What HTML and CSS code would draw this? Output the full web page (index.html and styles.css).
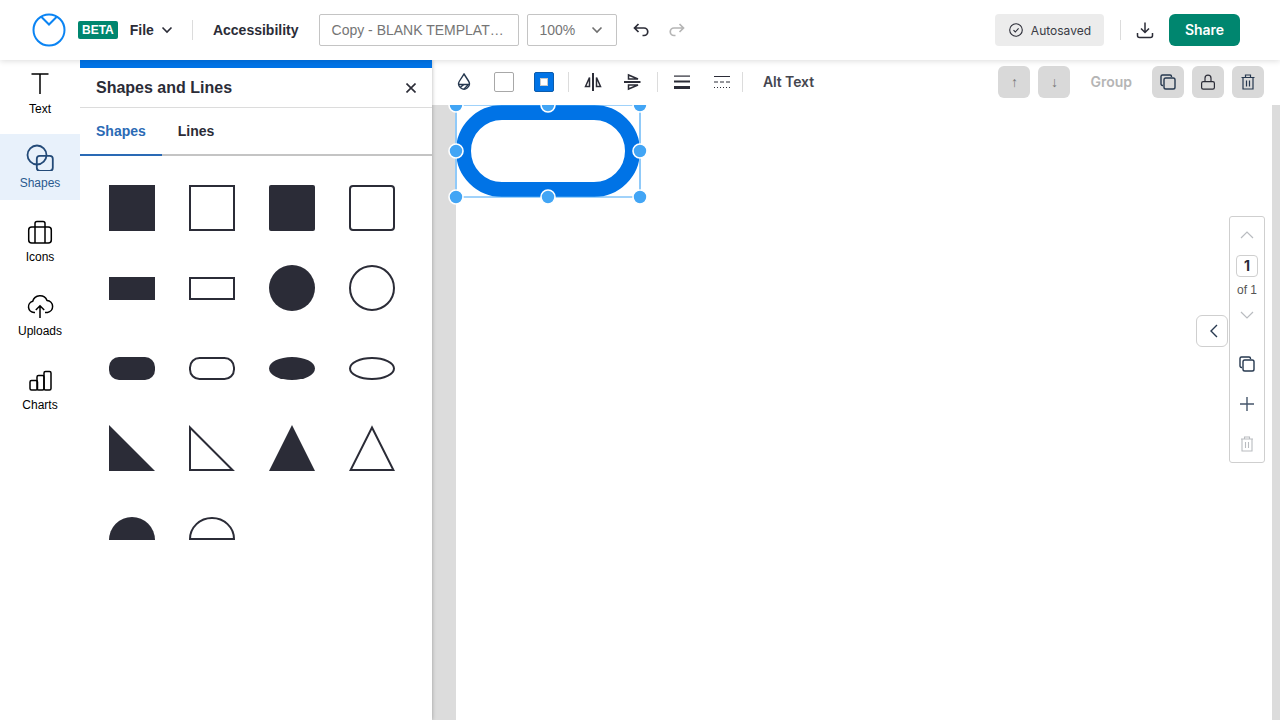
FILE: index.html
```html
<!DOCTYPE html>
<html>
<head>
  <title>Shapes and Lines</title>
  <link rel="stylesheet" href="styles.css">
</head>
<body>
  <!-- Top bar -->
  <header class="topbar">
    <svg class="logo" width="34" height="34" viewBox="0 0 34 34" fill="none" stroke="#0b84f3" stroke-width="2">
      <circle cx="17" cy="17" r="15.5"/>
      <path d="M9 3.5 17 11.5 25 3.5"/>
    </svg>
    <span class="beta">BETA</span>
    <span class="menu-file">File</span>
    <svg class="file-chevron" width="12" height="8" viewBox="0 0 12 8" fill="none" stroke="#2b2c37" stroke-width="1.6"><path d="M1.5 1.5 6 6 10.5 1.5"/></svg>
    <span class="vline vline-file"></span>
    <span class="menu-access">Accessibility</span>
    <div class="doc-title">Copy - BLANK TEMPLAT…</div>
    <div class="zoom-select">
      <span>100%</span>
      <svg width="12" height="8" viewBox="0 0 12 8" fill="none" stroke="#6f6f6f" stroke-width="1.6"><path d="M1.5 1.5 6 6 10.5 1.5"/></svg>
    </div>
    <svg class="undo" width="16" height="14" viewBox="0 0 16 14" fill="none" stroke="#2b2c37" stroke-width="1.7"><path d="M5.5 1 1.5 5 5.5 9M1.5 5H11a3.7 3.7 0 0 1 0 7.5H9.5"/></svg>
    <svg class="redo" width="16" height="14" viewBox="0 0 16 14" fill="none" stroke="#b5b5b5" stroke-width="1.7"><path d="M10.5 1 14.5 5 10.5 9M14.5 5H5a3.7 3.7 0 0 0 0 7.5h1.5"/></svg>

    <div class="autosaved">
      <svg width="14" height="14" viewBox="0 0 14 14" fill="none" stroke="#2b2c37" stroke-width="1.1"><circle cx="7" cy="7" r="6.3"/><path d="M4.5 7.2 6.3 9 9.6 5.3"/></svg>
      <span>Autosaved</span>
    </div>
    <span class="vline vline-save"></span>
    <svg class="download" width="18" height="18" viewBox="0 0 18 18" fill="none" stroke="#2b2c37" stroke-width="1.5"><path d="M9 1.5V11M5 7.5 9 11.5 13 7.5M1.5 12v2.5a2 2 0 0 0 2 2h11a2 2 0 0 0 2-2V12"/></svg>
    <button class="share">Share</button>
  </header>

  <div class="main">
    <!-- Left tool rail -->
    <nav class="rail">
      <div class="rail-item">
        <svg width="28" height="28" viewBox="0 0 28 28" fill="none" stroke="#000" stroke-width="1.5"><path d="M5.5 5H22.5M14 5V25"/></svg>
        <span>Text</span>
      </div>
      <div class="rail-item rail-active">
        <svg width="28" height="28" viewBox="0 0 28 28" fill="none" stroke="#234a78" stroke-width="1.8"><circle cx="11" cy="12" r="9.5"/><rect x="10.8" y="12.8" width="16" height="15" rx="3"/></svg>
        <span>Shapes</span>
      </div>
      <div class="rail-item">
        <svg width="28" height="28" viewBox="0 0 28 28" fill="none" stroke="#000" stroke-width="1.5"><rect x="2.7" y="10" width="22.6" height="16" rx="3"/><path d="M9 26V6.5a2 2 0 0 1 2-2h6a2 2 0 0 1 2 2V26"/></svg>
        <span>Icons</span>
      </div>
      <div class="rail-item">
        <svg width="28" height="28" viewBox="0 0 28 28" fill="none" stroke="#000" stroke-width="1.5"><path d="M9 21.5H8a5.7 5.7 0 0 1-1.3-11.2A7.6 7.6 0 0 1 21 9.4a6.1 6.1 0 0 1 .5 12.1H19"/><path d="M14 27V15M9.8 19 14 14.8 18.2 19"/></svg>
        <span>Uploads</span>
      </div>
      <div class="rail-item">
        <svg width="28" height="28" viewBox="0 0 28 28" fill="none" stroke="#000" stroke-width="1.5"><rect x="4" y="15.5" width="7.5" height="9.5" rx="1.5"/><rect x="11" y="10.5" width="7" height="14.5" rx="1.5"/><rect x="18" y="6.5" width="7" height="18.5" rx="1.5"/></svg>
        <span>Charts</span>
      </div>
    </nav>

    <!-- Shapes panel -->
    <section class="panel">
      <div class="panel-head">
        <h2>Shapes and Lines</h2>
        <svg width="10" height="10" viewBox="0 0 10 10" fill="none" stroke="#2b2c37" stroke-width="1.6"><path d="M.5.5 9.5 9.5M9.5.5.5 9.5"/></svg>
      </div>
      <div class="tabs">
        <div class="tab tab-active">Shapes</div>
        <div class="tab">Lines</div>
      </div>
      <div class="shape-grid">
        <svg class="solid" viewBox="0 0 46 46"><rect width="46" height="46"/></svg>
        <svg class="line" viewBox="0 0 46 46"><rect x="1" y="1" width="44" height="44"/></svg>
        <svg class="solid" viewBox="0 0 46 46"><rect width="46" height="46" rx="2"/></svg>
        <svg class="line" viewBox="0 0 46 46"><rect x="1" y="1" width="44" height="44" rx="3"/></svg>

        <svg class="solid" viewBox="0 0 46 46"><rect y="12" width="46" height="23"/></svg>
        <svg class="line" viewBox="0 0 46 46"><rect x="1" y="13" width="44" height="21"/></svg>
        <svg class="solid" viewBox="0 0 46 46"><circle cx="23" cy="23" r="23"/></svg>
        <svg class="line" viewBox="0 0 46 46"><circle cx="23" cy="23" r="22"/></svg>

        <svg class="solid" viewBox="0 0 46 46"><rect y="12" width="46" height="23" rx="10"/></svg>
        <svg class="line" viewBox="0 0 46 46"><rect x="1" y="13" width="44" height="21" rx="9.5"/></svg>
        <svg class="solid" viewBox="0 0 46 46"><ellipse cx="23" cy="23.5" rx="23" ry="11.5"/></svg>
        <svg class="line" viewBox="0 0 46 46"><ellipse cx="23" cy="23.5" rx="22" ry="10.5"/></svg>

        <svg class="solid" viewBox="0 0 46 46"><path d="M0 0 46 46H0Z"/></svg>
        <svg class="line" viewBox="0 0 46 46"><path d="M1 2.5 43.5 45H1Z"/></svg>
        <svg class="solid" viewBox="0 0 46 46"><path d="M23 0 46 46H0Z"/></svg>
        <svg class="line" viewBox="0 0 46 46"><path d="M23 2.5 44.4 45H1.6Z"/></svg>

        <svg class="solid" viewBox="0 0 46 46"><path d="M0 35A23 23 0 0 1 46 35Z"/></svg>
        <svg class="line" viewBox="0 0 46 46"><path d="M1 34A22 21 0 0 1 45 34Z"/></svg>
      </div>
    </section>

    <!-- Workspace -->
    <section class="workspace">
      <div class="toolbar">
        <svg class="tool tool-drop" width="16" height="18" viewBox="0 0 16 18" fill="none" stroke="#26384f" stroke-width="1.4"><path d="M8 1 12.5 8A5.3 5.3 0 1 1 3.5 8Z"/><path d="M3 11.5H13M4 14.5 8 11.5M8 16 12 12"/></svg>
        <span class="swatch"></span>
        <span class="swatch-stroke"><i></i></span>
        <span class="tool-sep"></span>
        <svg class="tool" width="18" height="18" viewBox="0 0 18 18" fill="none" stroke="#2b2c37" stroke-width="1.5"><path d="M9 0V18" stroke-width="2"/><path d="M1.5 13.5 5.5 4.5V13.5ZM12.5 4.5 16.5 13.5H12.5Z"/></svg>
        <svg class="tool tool-flip" width="18" height="18" viewBox="0 0 18 18" fill="none" stroke="#2b2c37" stroke-width="1.5"><path d="M0 9H16.5" stroke-width="2"/><path d="M4.5 2V6H14ZM4.5 12V16L14 12Z"/></svg>
        <span class="tool-sep tool-sep-b"></span>
        <svg class="tool tool-lines" width="16" height="14" viewBox="0 0 16 14" fill="#2b2c37"><rect width="16" height="1.2" y=".5"/><rect width="16" height="2" y="5.5"/><rect width="16" height="3" y="11"/></svg>
        <svg class="tool tool-dash" width="16" height="14" viewBox="0 0 16 14" fill="none" stroke="#2b2c37"><path d="M0 1.5H16"/><path d="M0 7H16" stroke-dasharray="4 2"/><path d="M0 12.5H16" stroke-dasharray="1 2" /></svg>
        <span class="tool-sep tool-sep-c"></span>
        <span class="alt-text">Alt Text</span>

        <div class="tool-right">
          <button class="square-btn arrow-btn">↑</button>
          <button class="square-btn arrow-btn">↓</button>
          <span class="group-label">Group</span>
          <button class="square-btn">
            <svg width="16" height="16" viewBox="0 0 16 16" fill="none" stroke="#26384f" stroke-width="1.4"><path d="M3 11.5H2.5A1.5 1.5 0 0 1 1 10V2.5A1.5 1.5 0 0 1 2.5 1H10a1.5 1.5 0 0 1 1.5 1.5V3"/><rect x="4" y="4" width="11" height="11" rx="1.8"/></svg>
          </button>
          <button class="square-btn">
            <svg width="14" height="16" viewBox="0 0 14 16" fill="none" stroke="#2b2c37" stroke-width="1.2"><rect x=".6" y="7.6" width="12.8" height="7.6" rx="1.6"/><path d="M4 7.6V4.2a3 3 0 0 1 6 0V7.6"/></svg>
          </button>
          <button class="square-btn">
            <svg width="14" height="16" viewBox="0 0 14 16" fill="none" stroke="#26384f" stroke-width="1.2"><path d="M.5 3.5H13.5M4.5 3.5V1h5V3.5M2 3.5V15H12V3.5M5.5 6.5V12.5M8.5 6.5V12.5"/></svg>
          </button>
        </div>
      </div>

      <div class="canvas">
        <div class="page">
          <!-- selected shape on the page -->
          <svg class="selection" width="200" height="112" viewBox="0 0 200 112" fill="none">
            <rect x="15.5" y="10.5" width="169" height="77" rx="38.5" stroke="#0073e6" stroke-width="15" fill="#fff"/>
            <path d="M8 3H192M8 95H192" stroke="#42a5f5"/>
            <path d="M8 3V95M192 3V95" stroke="#90caf9" stroke-width="2"/>
            <g fill="#42a5f5" stroke="#fff" stroke-width="1.6">
              <circle cx="8" cy="3" r="7"/><circle cx="100" cy="3" r="7"/><circle cx="192" cy="3" r="7"/>
              <circle cx="8" cy="49" r="7"/><circle cx="192" cy="49" r="7"/>
              <circle cx="8" cy="95" r="7"/><circle cx="100" cy="95" r="7"/><circle cx="192" cy="95" r="7"/>
            </g>
          </svg>

          <button class="collapse-tab">
            <svg width="10" height="14" viewBox="0 0 10 14" fill="none" stroke="#26384f" stroke-width="1.4"><path d="M8 1 2 7 8 13"/></svg>
          </button>

          <div class="pager">
            <div class="pager-row">
              <svg width="14" height="8" viewBox="0 0 14 8" fill="none" stroke="#b9bcc0" stroke-width="1.2"><path d="M1 7 7 1 13 7"/></svg>
            </div>
            <div class="page-num">1</div>
            <div class="page-of">of 1</div>
            <div class="pager-row pager-down">
              <svg width="14" height="8" viewBox="0 0 14 8" fill="none" stroke="#b9bcc0" stroke-width="1.2"><path d="M1 1 7 7 13 1"/></svg>
            </div>
            <div class="pager-sep"></div>
            <div class="pager-tool">
              <svg width="16" height="16" viewBox="0 0 16 16" fill="none" stroke="#26384f" stroke-width="1.4"><path d="M3 11.5H2.5A1.5 1.5 0 0 1 1 10V2.5A1.5 1.5 0 0 1 2.5 1H10a1.5 1.5 0 0 1 1.5 1.5V3"/><rect x="4" y="4" width="11" height="11" rx="1.8"/></svg>
            </div>
            <div class="pager-tool">
              <svg width="14" height="14" viewBox="0 0 14 14" fill="none" stroke="#45566b" stroke-width="1.4"><path d="M7 0V14M0 7H14"/></svg>
            </div>
            <div class="pager-tool">
              <svg width="12" height="16" viewBox="0 0 12 16" fill="none" stroke="#b9bcc0" stroke-width="1.1"><path d="M0 3H12M3.5 3V1H8.5V3M1 3V15H11V3M4.5 6V12M7.5 6V12"/></svg>
            </div>
          </div>
        </div>
      </div>
    </section>
  </div>
</body>
</html>
```

FILE: styles.css
```css
* {
  box-sizing: border-box;
}
html, body {
  margin: 0;
  height: 100%;
  overflow: hidden;
}
body {
  font-family: "Liberation Sans", Arial, sans-serif;
  color: #2b2c37;
  background-color: #fff;
}
button {
  font-family: inherit;
  border: none;
  padding: 0;
}

/* top bar */
.topbar {
  position: relative;
  z-index: 5;
  display: flex;
  align-items: center;
  height: 60px;
  padding: 0 40px 0 32px;
  background-color: #fff;
  box-shadow: 0 1px 6px rgba(0,0,0,0.14);
}
.beta {
  margin-left: 12px;
  padding: 0 4px;
  height: 18px;
  line-height: 18px;
  font-size: 12px;
  font-weight: bold;
  color: #fff;
  background-color: #00866f;
  border-radius: 2px;
}
.menu-file {
  margin-left: 12px;
  font-size: 14px;
  font-weight: bold;
}
.file-chevron {
  margin-left: 7px;
}
.vline {
  width: 1px;
  height: 20px;
  background-color: #dcdcdc;
}
.vline-file {
  margin-left: 19px;
}
.menu-access {
  margin-left: 20px;
  font-size: 14px;
  font-weight: bold;
}
.doc-title {
  width: 200px;
  height: 32px;
  margin-left: 20px;
  padding: 0 12px;
  line-height: 30px;
  font-size: 14px;
  color: #757575;
  border: 1px solid #c4c4c4;
  border-radius: 2px;
  white-space: nowrap;
}
.zoom-select {
  display: flex;
  align-items: center;
  justify-content: space-between;
  width: 90px;
  height: 32px;
  margin-left: 8px;
  padding: 0 13px 0 12px;
  font-size: 14px;
  color: #757575;
  border: 1px solid #c4c4c4;
  border-radius: 2px;
}
.undo {
  margin-left: 16px;
}
.redo {
  margin-left: 20px;
}
.autosaved {
  display: flex;
  align-items: center;
  gap: 8px;
  height: 32px;
  margin-left: auto;
  padding: 0 13px 0 14px;
  font-family: Inter, sans-serif;
  font-size: 12px;
  color: #3a3b45;
  background-color: #ececec;
  border-radius: 4px;
}
.vline-save {
  margin-left: 16px;
}
.download {
  margin-left: 15px;
}
.share {
  width: 71px;
  height: 32px;
  margin-left: 15px;
  padding-bottom: 2px;
  font-family: Inter, sans-serif;
  font-size: 14px;
  font-weight: 600;
  color: #fff;
  background-color: #00866f;
  border-radius: 6px;
}

/* main area */
.main {
  display: flex;
  height: 660px;
}

/* left rail */
.rail {
  position: relative;
  z-index: 3;
  display: flex;
  flex-direction: column;
  gap: 8px;
  flex: 0 0 80px;
  background-color: #fff;
}
.rail-item {
  display: flex;
  flex-direction: column;
  align-items: center;
  height: 66px;
  padding-top: 9px;
  font-size: 12px;
  color: #000;
}
.rail-item svg {
  display: block;
  margin-bottom: 5px;
}
.rail-active {
  background-color: #e8f1fb;
  color: #2a5a8f;
}

/* shapes panel */
.panel {
  position: relative;
  z-index: 2;
  flex: 0 0 352px;
  background-color: #fff;
  border-top: 8px solid #0073e6;
  box-shadow: 0 0 4px rgba(0,0,0,0.3);
}
.panel-head {
  display: flex;
  align-items: center;
  justify-content: space-between;
  height: 40px;
  padding: 0 16px;
  border-bottom: 1px solid #dcdcdc;
}
.panel-head h2 {
  margin: 0;
  font-size: 16px;
  font-weight: bold;
}
.tabs {
  display: flex;
  height: 48px;
  border-bottom: 2px solid #c4c4c4;
}
.tab {
  height: 48px;
  padding: 0 16px;
  line-height: 46px;
  font-size: 14px;
  font-weight: bold;
}
.tab-active {
  color: #2a6ab5;
  border-bottom: 2px solid #2a6ab5;
}
.shape-grid {
  display: grid;
  grid-template-columns: repeat(4, 46px);
  grid-auto-rows: 46px;
  gap: 34px;
  padding: 29px 0 0 29px;
}
.shape-grid svg {
  display: block;
  width: 46px;
  height: 46px;
}
.solid {
  fill: #2b2c37;
}
.line {
  fill: none;
  stroke: #2b2c37;
  stroke-width: 2;
}

/* workspace */
.workspace {
  flex: 1;
  display: flex;
  flex-direction: column;
  min-width: 0;
}
.toolbar {
  position: relative;
  z-index: 1;
  display: flex;
  align-items: center;
  flex: 0 0 45px;
  padding: 0 16px 1px 24px;
  background-color: #fff;
}
.tool {
  display: block;
  flex: none;
}
.tool-drop {
  margin-right: 22px;
}
.swatch {
  width: 20px;
  height: 20px;
  margin-right: 20px;
  border: 1px solid #a8a8a8;
  border-radius: 2px;
  background-color: #fff;
}
.swatch-stroke {
  display: flex;
  align-items: center;
  justify-content: center;
  width: 20px;
  height: 20px;
  background-color: #0073e6;
  border: 1px solid #0b5cad;
  border-radius: 2px;
}
.swatch-stroke i {
  width: 8px;
  height: 8px;
  background-color: #fff;
  border: 1px solid #c8c8c8;
}
.tool-sep {
  width: 1px;
  height: 20px;
  margin: 0 15px 0 14px;
  background-color: #dcdcdc;
}
.tool-flip {
  margin-left: 22px;
}
.tool-sep-b {
  margin-left: 15px;
  margin-right: 16px;
}
.tool-dash {
  margin-left: 24px;
}
.tool-sep-c {
  margin-left: 12px;
  margin-right: 20px;
}
.alt-text {
  margin-bottom: 2px;
  font-family: Inter, sans-serif;
  font-size: 14px;
  font-weight: 600;
  letter-spacing: -0.1px;
  color: #45464f;
}
.tool-right {
  display: flex;
  align-items: center;
  gap: 8px;
  margin-left: auto;
}
.square-btn {
  display: flex;
  align-items: center;
  justify-content: center;
  width: 32px;
  height: 32px;
  background-color: #d9d9d9;
  border-radius: 6px;
}
.arrow-btn {
  font-size: 14px;
  color: #777;
}
.group-label {
  margin: 0 12px 2px;
  font-family: Inter, sans-serif;
  font-size: 14px;
  font-weight: 600;
  color: #b5b5b5;
}

/* canvas */
.canvas {
  flex: 1;
  display: flex;
  padding: 0 8px 0 24px;
  background-color: #dcdcdc;
  overflow: hidden;
}
.page {
  position: relative;
  flex: 1;
  background-color: #fff;
}
.selection {
  position: absolute;
  left: -8px;
  top: -3px;
}
.collapse-tab {
  position: absolute;
  left: 740px;
  top: 210px;
  display: flex;
  align-items: center;
  justify-content: center;
  width: 32px;
  height: 32px;
  padding-left: 3px;
  background-color: #fff;
  border: 1px solid #cfcfcf;
  border-radius: 6px;
}
.pager {
  position: absolute;
  left: 773px;
  top: 111px;
  display: flex;
  flex-direction: column;
  align-items: center;
  width: 36px;
  height: 247px;
  background-color: #fff;
  border: 1px solid #cfcfcf;
  border-radius: 3px;
}
.pager-row {
  display: flex;
  align-items: center;
  justify-content: center;
  flex: 0 0 36px;
}
.pager-down {
  flex-basis: 24px;
}
.page-num {
  width: 22px;
  height: 22px;
  margin-top: 2px;
  line-height: 20px;
  text-align: center;
  font-family: Inter, sans-serif;
  font-size: 14px;
  font-weight: 700;
  border: 1px solid #cfcfcf;
  border-radius: 4px;
}
.page-of {
  height: 26px;
  line-height: 26px;
  font-size: 12px;
  color: #555;
}
.pager-sep {
  width: 24px;
  height: 1px;
  margin-top: 12px;
  margin-bottom: 5px;
  background-color: #dcdcdc;
}
.pager-tool {
  display: flex;
  align-items: center;
  justify-content: center;
  flex: 0 0 40px;
}
```
